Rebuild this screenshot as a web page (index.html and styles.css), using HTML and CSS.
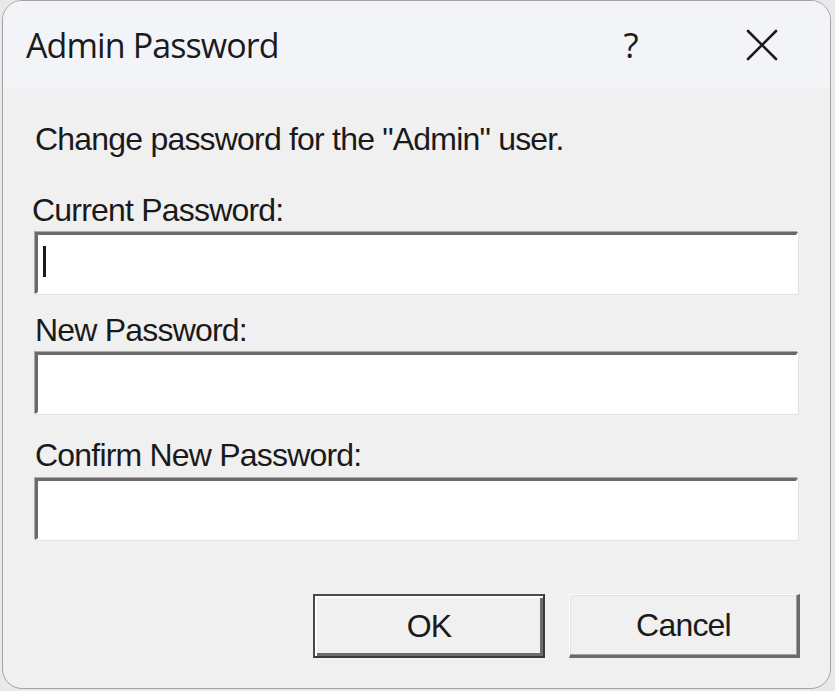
FILE: index.html
```html
<!DOCTYPE html>
<html lang="en">
<head>
<meta charset="utf-8">
<title>Admin Password</title>
<link rel="stylesheet" href="styles.css">
</head>
<body>
<div class="window">
  <div class="titlebar">
    <div class="title">Admin Password</div>
    <div class="help">?</div>
    <div class="close">
      <svg width="32" height="32" viewBox="0 0 32 32" aria-hidden="true">
        <path d="M2 2 L30 30 M30 2 L2 30" stroke="#1b1b1b" stroke-width="2.6" fill="none" stroke-linecap="round"/>
      </svg>
    </div>
  </div>
  <div class="content">
    <div class="intro">Change password for the "Admin" user.</div>
    <div class="label label-first">Current Password:</div>
    <div class="field"><span class="caret"></span></div>
    <div class="label label-second">New Password:</div>
    <div class="field field-second"></div>
    <div class="label label-third">Confirm New Password:</div>
    <div class="field field-third"></div>
    <div class="buttons">
      <div class="btn btn-default">OK</div>
      <div class="btn">Cancel</div>
    </div>
  </div>
</div>
</body>
</html>
```

FILE: styles.css
```css
html, body {
  margin: 0;
  padding: 0;
}

body {
  background: #e9e9e9;
  width: 835px;
  height: 691px;
  overflow: hidden;
}

.window {
  margin-left: 2px;
  width: 827px;
  height: 687px;
  border: 1px solid #a3a3a3;
  border-radius: 20px;
  background: #f0f0f0;
  overflow: hidden;
}

.titlebar {
  height: 87px;
  background: #f3f4f7;
  display: flex;
  align-items: center;
  font-family: "Open Sans", "Noto Sans", sans-serif;
  color: #1b1b1b;
}

.title {
  margin-left: 23px;
  font-size: 34px;
  letter-spacing: -0.9px;
  line-height: 40px;
  flex: 1;
}

.help {
  font-size: 35px;
  font-weight: 500;
  line-height: 40px;
  width: 30px;
  text-align: center;
  margin-right: 100px;
}

.close {
  width: 32px;
  height: 32px;
  margin-right: 52px;
  display: flex;
}

.content {
  padding: 35px 30px 0 32px;
  font-family: "Liberation Sans", Arial, sans-serif;
  font-size: 32px;
  letter-spacing: -0.8px;
  line-height: 32px;
  color: #1a1a1a;
}

.label-first {
  margin-top: 39px;
  margin-left: -3px;
}

.label-second {
  margin-top: 20px;
}

.label-third {
  margin-top: 25px;
}

.field {
  margin-top: 6px;
  width: 758px;
  height: 57px;
  background: #ffffff;
  border-style: solid;
  border-width: 3px 2px 2px 3px;
  border-color: #6b6b6b #fdfdfd #fdfdfd #6b6b6b;
  box-shadow: -1px -1px 0 #a9a9a9, 1px 1px 0 #e3e3e3;
  display: flex;
  align-items: center;
}

.field-third {
  margin-top: 7px;
}

.caret {
  display: block;
  width: 3px;
  height: 31px;
  margin-left: 5px;
  margin-top: -4px;
  background: #1a1a1a;
}

.buttons {
  margin-top: 54px;
  display: flex;
  justify-content: flex-end;
  gap: 24px;
}

.btn {
  width: 227px;
  height: 60px;
  box-sizing: content-box;
  border-style: solid;
  border-width: 1px 3px 3px 1px;
  border-color: #ffffff #6b6b6b #6b6b6b #ffffff;
  box-shadow: inset -1px -1px 0 #a0a0a0, inset 1px 1px 0 #e3e3e3;
  background: #f0f0f0;
  display: flex;
  align-items: center;
  justify-content: center;
}

.btn-default {
  width: 228px;
  height: 60px;
  border-width: 2px;
  border-color: #4a4a4a #3a3a3a #3a3a3a #4a4a4a;
  box-shadow: inset 2px 2px 0 #ffffff, inset -3px -3px 0 #6b6b6b;
}
```
